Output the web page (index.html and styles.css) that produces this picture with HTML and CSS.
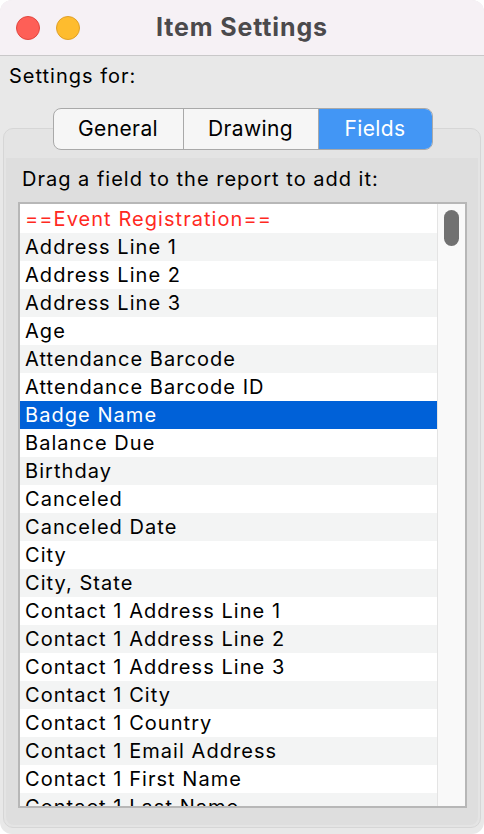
FILE: index.html
```html
<!DOCTYPE html>
<html>
<head>
<meta charset="utf-8">
<link rel="stylesheet" href="styles.css">
</head>
<body>
<div class="window">
  <div class="titlebar">
    <div class="lights">
      <span class="light red"></span>
      <span class="light orange"></span>
    </div>
    <div class="title">Item Settings</div>
  </div>
  <div class="content">
    <div class="settings-label">Settings for:</div>
    <div class="tabs-row">
      <div class="tabs">
        <div class="tab">General</div>
        <div class="tab">Drawing</div>
        <div class="tab active">Fields</div>
      </div>
    </div>
    <div class="groupbox">
      <div class="inner">
        <div class="hint">Drag a field to the report to add it:</div>
        <div class="listbox">
          <div class="rows">
            <div class="row header">==Event Registration==</div>
            <div class="row">Address Line 1</div>
            <div class="row">Address Line 2</div>
            <div class="row">Address Line 3</div>
            <div class="row">Age</div>
            <div class="row">Attendance Barcode</div>
            <div class="row">Attendance Barcode ID</div>
            <div class="row selected">Badge Name</div>
            <div class="row">Balance Due</div>
            <div class="row">Birthday</div>
            <div class="row">Canceled</div>
            <div class="row">Canceled Date</div>
            <div class="row">City</div>
            <div class="row">City, State</div>
            <div class="row">Contact 1 Address Line 1</div>
            <div class="row">Contact 1 Address Line 2</div>
            <div class="row">Contact 1 Address Line 3</div>
            <div class="row">Contact 1 City</div>
            <div class="row">Contact 1 Country</div>
            <div class="row">Contact 1 Email Address</div>
            <div class="row">Contact 1 First Name</div>
            <div class="row">Contact 1 Last Name</div>
          </div>
          <div class="scrollbar"><div class="thumb"></div></div>
        </div>
      </div>
    </div>
  </div>
</div>
</body>
</html>
```

FILE: styles.css
```css
* { box-sizing: border-box; }
html, body {
  margin: 0;
  padding: 0;
  background: #ffffff;
}
body {
  font-family: Inter, "Noto Sans", "DejaVu Sans", sans-serif;
  color: #000;
}
.window {
  width: 484px;
  height: 834px;
  border-radius: 12px;
  overflow: hidden;
  background: #e8e8e8;
  display: flex;
  flex-direction: column;
}
.titlebar {
  height: 56px;
  flex: none;
  background: #f6f1f5;
  border-bottom: 1px solid #c9c8c9;
  position: relative;
  display: flex;
  align-items: center;
  justify-content: center;
}
.lights {
  position: absolute;
  left: 16px;
  top: 16px;
  display: flex;
  gap: 16px;
}
.light {
  width: 24px;
  height: 24px;
  border-radius: 50%;
  display: block;
}
.red { background: #fe5f57; border: 1px solid #e2463f; }
.orange { background: #febc2e; border: 1px solid #e0a028; }
.title {
  font-size: 25px;
  font-weight: 700;
  letter-spacing: 0.85px;
  color: #4b4a4c;
  margin-top: -2px;
}
.content {
  flex: 1;
  display: flex;
  flex-direction: column;
}
.settings-label {
  font-size: 20px;
  letter-spacing: 1px;
  line-height: 24px;
  padding: 8px 0 0 9px;
  height: 52px;
}
.tabs-row {
  display: flex;
  justify-content: center;
  position: relative;
  z-index: 2;
  height: 42px;
  margin-bottom: -22px;
  padding-left: 1px;
}
.tabs {
  display: flex;
  height: 42px;
  border: 1px solid #a9a9a9;
  border-radius: 8px;
  background: #f6f6f6;
  overflow: hidden;
}
.tab {
  font-size: 21px;
  letter-spacing: 0.4px;
  line-height: 40px;
  text-align: center;
  border-right: 1px solid #a9a9a9;
}
.tab:nth-child(1) { width: 130px; }
.tab:nth-child(2) { width: 135px; }
.tab:nth-child(3) { width: 113px; border-right: none; }
.tab.active {
  background: #4296f5;
  color: #fff;
}
.groupbox {
  margin: 0 3px;
  height: 700px;
  border: 1px solid #d6d6d6;
  border-radius: 10px;
  background: #e4e4e4;
  padding: 29px 2px 2px 2px;
  display: flex;
}
.inner {
  flex: 1;
  background: #dedede;
  border-radius: 0 0 8px 8px;
  padding: 9px 11px 17px 12px;
  display: flex;
  flex-direction: column;
}
.hint {
  font-size: 20px;
  letter-spacing: 1px;
  line-height: 24px;
  padding-left: 4px;
  height: 35px;
}
.listbox {
  height: 607px;
  border: 2px solid #b7b7b7;
  background: #ffffff;
  display: flex;
  overflow: hidden;
}
.rows {
  flex: 1;
  padding-top: 1px;
  overflow: hidden;
}
.row {
  height: 28px;
  line-height: 28px;
  font-size: 20px;
  letter-spacing: 1.05px;
  padding-left: 5px;
  white-space: nowrap;
  background: #ffffff;
}
.row:nth-child(even) { background: #f3f4f4; }
.row.header { color: #ff2a1f; }
.row.selected {
  background: #0061d8;
  color: #ffffff;
}
.scrollbar {
  width: 28px;
  flex: none;
  background: #f9f9f9;
  border-left: 1px solid #e4e4e4;
  padding: 6px 0 0 6px;
}
.thumb {
  width: 15px;
  height: 36px;
  border-radius: 8px;
  background: #717171;
}
```
